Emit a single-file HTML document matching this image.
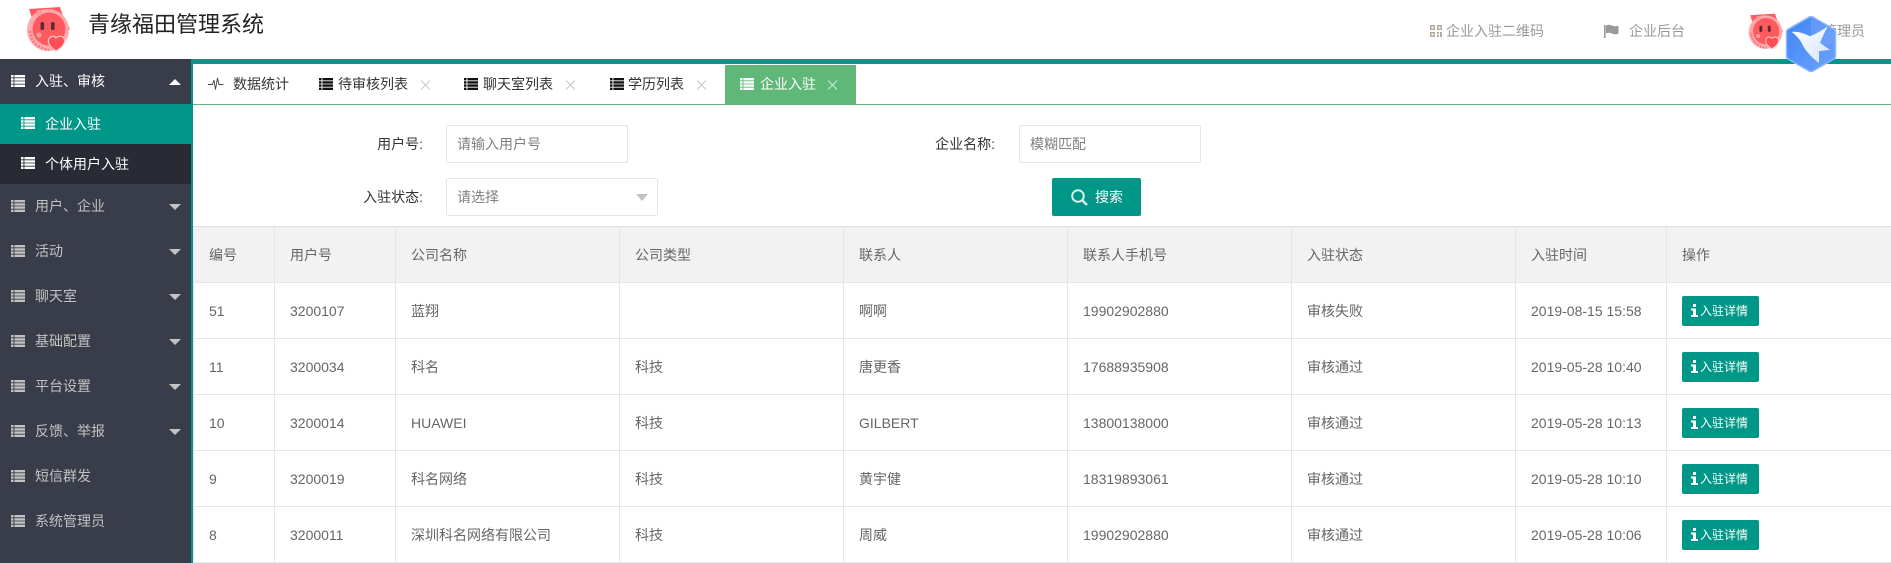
<!DOCTYPE html>
<html lang="zh-CN">
<head>
<meta charset="utf-8">
<title>青缘福田管理系统</title>
<style>
*{box-sizing:border-box}
html,body{margin:0;padding:0;width:1891px;height:563px;overflow:hidden;background:#fff}
body{font-family:"Liberation Sans","Noto Sans CJK SC",sans-serif;font-size:14px;color:#666;position:relative}
.a{position:absolute;white-space:nowrap}
.t{line-height:20px;height:20px}
.side{position:absolute;left:0;top:59px;width:191px;height:504px;background:#393d49}
.strip{position:absolute;left:191px;top:59px;width:2px;height:504px;background:#009688}
.bar{position:absolute;left:191px;top:59px;width:1700px;height:5px;background:#009688}
.tabline{position:absolute;left:193px;top:104px;width:1698px;height:1px;background:#5fb878}
.m{position:absolute;left:0;width:191px;height:45px;line-height:45px;color:#c2c2c2}
.m span{position:absolute;left:35px;top:0}
.m svg.l{position:absolute;left:11px;top:16px}
.arr{position:absolute;left:169px;top:20px;width:0;height:0;border-left:6px solid transparent;border-right:6px solid transparent;border-top:6px solid #c2c2c2}
.s{position:absolute;left:0;width:191px;height:40px;line-height:40px;color:#fff}
.s span{position:absolute;left:45px;top:0}
.s svg.l{position:absolute;left:21px;top:13px}
.tab{position:absolute;top:74px;line-height:20px;height:20px;color:#333}
.x{position:absolute;top:80px}
.inp{position:absolute;border:1px solid #e6e6e6;border-radius:2px;height:38px;line-height:36px;padding-left:10px;color:#808080;background:#fff}
.lab{position:absolute;line-height:20px;color:#333;text-align:right}
table{position:absolute;left:193px;top:226px;width:1720px;border-collapse:collapse;table-layout:fixed;color:#666;font-size:14px}
th,td{border:1px solid #e6e6e6;height:56px;padding:0 15px;text-align:left;font-weight:400;white-space:nowrap;overflow:hidden}
th{background:#f2f2f2}
tr:first-child th{border-top:1px solid #e2e2e2}
.bt{display:block;width:77px;height:30px;line-height:30px;background:#009688;color:#fff;font-size:12px;border-radius:2px;position:relative;padding-left:18px;font-weight:400}
.bt svg{position:absolute;left:9px;top:8px}
</style>
</head>
<body>
<svg width="0" height="0" style="position:absolute">
  <defs>
    <symbol id="list" viewBox="0 0 14 12">
      <path fill="currentColor" d="M0 0h2.500v2.400H0zM3.400 0H14v2.400H3.400zM0 3.200h2.500v2.400H0zM3.400 3.200H14v2.400H3.400zM0 6.400h2.500v2.400H0zM3.400 6.400H14v2.400H3.400zM0 9.600h2.500V12H0zM3.400 9.600H14V12H3.400z"/>
    </symbol>
    <symbol id="close" viewBox="0 0 11 10">
      <path fill="none" stroke="currentColor" stroke-width="1" d="M1 .5l9 9M10 .5l-9 9"/>
    </symbol>
    <symbol id="logo" viewBox="0 0 60 58">
      <path fill="#ff5b60" d="M9 9 L25 8 L40 7 L43 16 L50 29 L44 33 L30 30 L14 24Z"/>
      <circle cx="28" cy="30" r="21" fill="#ffa9ac"/>
      <circle cx="29" cy="29" r="16.500" fill="#ff5a60"/>
      <path fill="none" stroke="#ff7478" stroke-width="2.400" stroke-dasharray="2 1.500" d="M10 31c0 9 8 18 19 19"/>
      <circle cx="19" cy="13" r="3" fill="#ff9a9d"/>
      <circle cx="19" cy="35" r="2.600" fill="#ff9a9d"/>
      <rect x="20.500" y="22" width="3.600" height="8" rx="1.800" fill="#5a2c30"/>
      <rect x="31" y="22" width="3.600" height="8" rx="1.800" fill="#5a2c30"/>
      <path fill="#ff4d55" stroke="#ffc4c6" stroke-width="1.200" d="M36 51 C30 47 28 43 28.500 40 C29.500 36 34 35 36 38 C39 35 44 36 44.500 40 C45 44 41 48 36 51Z"/>
    </symbol>
  </defs>
</svg>

<!-- Header -->
<svg class="a" style="left:20px;top:0" width="60" height="58"><use href="#logo"/></svg>
<div class="a" style="left:88px;top:10px;font-size:22px;line-height:30px;color:#222">青缘福田管理系统</div>

<svg class="a" style="left:1430px;top:25px" width="12" height="12" viewBox="0 0 12 12"><path fill="#b5aaa0" d="M0 0h5v5H0zM7 0h5v5H7zM0 7h5v5H0zM7 7h2v2H7zM10 7h2v5h-2zM7 10h2v2H7z"/><path fill="#fff" d="M1.500 1.500h2v2h-2zM8.500 1.500h2v2h-2zM1.500 8.500h2v2h-2z"/></svg>
<div class="a t" style="left:1446px;top:21px;color:#999">企业入驻二维码</div>
<svg class="a" style="left:1604px;top:24px" width="15" height="14" viewBox="0 0 15 14"><path fill="#999" d="M0 1h1.600v13H0zM2 1.500c2-1 4-1 6 0s4 1 6.500.2v8c-2.500.8-4.500.8-6.500-.2s-4-1-6 0z"/></svg>
<div class="a t" style="left:1629px;top:21px;color:#999">企业后台</div>
<svg class="a" style="left:1743px;top:8px" width="48" height="46.400"><use href="#logo"/></svg>
<div class="a t" style="left:1823px;top:21px;color:#999">管理员</div>

<!-- Bars -->
<div class="bar"></div>
<div class="strip"></div>
<div class="tabline"></div>

<!-- Sidebar -->
<div class="side"></div>
<div class="m" style="top:59px;color:#fff"><svg class="l" width="14" height="12" style="color:#fff"><use href="#list"/></svg><span>入驻、审核</span><i class="arr" style="border-top:0;border-bottom:6px solid #fff"></i></div>
<div class="s" style="top:104px;background:#009688"><svg class="l" width="14" height="12"><use href="#list"/></svg><span>企业入驻</span></div>
<div class="s" style="top:144px;background:#282b33"><svg class="l" width="14" height="12"><use href="#list"/></svg><span>个体用户入驻</span></div>
<div class="m" style="top:184px"><svg class="l" width="14" height="12"><use href="#list"/></svg><span>用户、企业</span><i class="arr"></i></div>
<div class="m" style="top:229px"><svg class="l" width="14" height="12"><use href="#list"/></svg><span>活动</span><i class="arr"></i></div>
<div class="m" style="top:274px"><svg class="l" width="14" height="12"><use href="#list"/></svg><span>聊天室</span><i class="arr"></i></div>
<div class="m" style="top:319px"><svg class="l" width="14" height="12"><use href="#list"/></svg><span>基础配置</span><i class="arr"></i></div>
<div class="m" style="top:364px"><svg class="l" width="14" height="12"><use href="#list"/></svg><span>平台设置</span><i class="arr"></i></div>
<div class="m" style="top:409px"><svg class="l" width="14" height="12"><use href="#list"/></svg><span>反馈、举报</span><i class="arr"></i></div>
<div class="m" style="top:454px"><svg class="l" width="14" height="12"><use href="#list"/></svg><span>短信群发</span></div>
<div class="m" style="top:499px"><svg class="l" width="14" height="12"><use href="#list"/></svg><span>系统管理员</span></div>

<!-- Tabs -->
<svg class="a" style="left:208px;top:77px" width="16" height="14" viewBox="0 0 16 14"><path fill="none" stroke="#444" stroke-width=".9" d="M0 7.500h4.500L6 3l1.500 9.500L9.500 1l1.500 6.500h4.500"/></svg>
<div class="tab" style="left:233px">数据统计</div>
<svg class="a" style="left:319px;top:78px;color:#111" width="14" height="12"><use href="#list"/></svg>
<div class="tab" style="left:338px">待审核列表</div><svg class="x" style="left:420px;color:#c8c8c8" width="11" height="10"><use href="#close"/></svg>
<svg class="a" style="left:464px;top:78px;color:#111" width="14" height="12"><use href="#list"/></svg>
<div class="tab" style="left:483px">聊天室列表</div><svg class="x" style="left:565px;color:#c8c8c8" width="11" height="10"><use href="#close"/></svg>
<svg class="a" style="left:610px;top:78px;color:#111" width="14" height="12"><use href="#list"/></svg>
<div class="tab" style="left:628px">学历列表</div><svg class="x" style="left:696px;color:#c8c8c8" width="11" height="10"><use href="#close"/></svg>
<div class="a" style="left:725px;top:65px;width:131px;height:39px;background:#5fb878"></div>
<svg class="a" style="left:740px;top:78px;color:#fff" width="14" height="12"><use href="#list"/></svg>
<div class="tab" style="left:760px;color:#fff">企业入驻</div><svg class="x" style="left:827px;color:#cfe8d7" width="11" height="10"><use href="#close"/></svg>

<!-- Form -->
<div class="lab" style="left:343px;top:134px;width:80px">用户号:</div>
<div class="inp" style="left:446px;top:125px;width:182px">请输入用户号</div>
<div class="lab" style="left:915px;top:134px;width:80px">企业名称:</div>
<div class="inp" style="left:1019px;top:125px;width:182px">模糊匹配</div>
<div class="lab" style="left:343px;top:187px;width:80px">入驻状态:</div>
<div class="inp" style="left:446px;top:178px;width:212px">请选择<i style="position:absolute;left:189px;top:15px;width:0;height:0;border-left:6px solid transparent;border-right:6px solid transparent;border-top:7px solid #c2c2c2"></i></div>
<div class="a" style="left:1052px;top:178px;width:89px;height:38px;background:#009688;border-radius:2px;color:#fff;line-height:38px;padding-left:43px;font-size:14px">搜索
  <svg style="position:absolute;left:19px;top:11px" width="17" height="17" viewBox="0 0 17 17"><circle cx="7" cy="7" r="5.800" fill="none" stroke="#d8f0ec" stroke-width="2"/><path d="M11 11l5 5" stroke="#d8f0ec" stroke-width="2.600"/></svg>
</div>

<!-- Table -->
<table>
<colgroup><col style="width:81px"><col style="width:121px"><col style="width:224px"><col style="width:224px"><col style="width:224px"><col style="width:224px"><col style="width:224px"><col style="width:151px"><col></colgroup>
<tr><th>编号</th><th>用户号</th><th>公司名称</th><th>公司类型</th><th>联系人</th><th>联系人手机号</th><th>入驻状态</th><th>入驻时间</th><th>操作</th></tr>
<tr><td>51</td><td>3200107</td><td>蓝翔</td><td></td><td>啊啊</td><td>19902902880</td><td>审核失败</td><td>2019-08-15 15:58</td><td><span class="bt"><svg width="7" height="13" viewBox="0 0 7 13"><path fill="#fff" d="M2 0h3v3H2zM0 4.500h5V11h2v2H0v-2h2V6.500H0z"/></svg>入驻详情</span></td></tr>
<tr><td>11</td><td>3200034</td><td>科名</td><td>科技</td><td>唐更香</td><td>17688935908</td><td>审核通过</td><td>2019-05-28 10:40</td><td><span class="bt"><svg width="7" height="13" viewBox="0 0 7 13"><path fill="#fff" d="M2 0h3v3H2zM0 4.500h5V11h2v2H0v-2h2V6.500H0z"/></svg>入驻详情</span></td></tr>
<tr><td>10</td><td>3200014</td><td>HUAWEI</td><td>科技</td><td>GILBERT</td><td>13800138000</td><td>审核通过</td><td>2019-05-28 10:13</td><td><span class="bt"><svg width="7" height="13" viewBox="0 0 7 13"><path fill="#fff" d="M2 0h3v3H2zM0 4.500h5V11h2v2H0v-2h2V6.500H0z"/></svg>入驻详情</span></td></tr>
<tr><td>9</td><td>3200019</td><td>科名网络</td><td>科技</td><td>黄宇健</td><td>18319893061</td><td>审核通过</td><td>2019-05-28 10:10</td><td><span class="bt"><svg width="7" height="13" viewBox="0 0 7 13"><path fill="#fff" d="M2 0h3v3H2zM0 4.500h5V11h2v2H0v-2h2V6.500H0z"/></svg>入驻详情</span></td></tr>
<tr><td>8</td><td>3200011</td><td>深圳科名网络有限公司</td><td>科技</td><td>周威</td><td>19902902880</td><td>审核通过</td><td>2019-05-28 10:06</td><td><span class="bt"><svg width="7" height="13" viewBox="0 0 7 13"><path fill="#fff" d="M2 0h3v3H2zM0 4.500h5V11h2v2H0v-2h2V6.500H0z"/></svg>入驻详情</span></td></tr>
</table>

<!-- Floating blue hexagon badge -->
<svg class="a" style="left:1785px;top:15px" width="52" height="58" viewBox="0 0 52 58">
  <defs>
    <linearGradient id="hx" x1="0" y1="0" x2="1" y2="1"><stop offset="0" stop-color="#3f84f7"/><stop offset="1" stop-color="#6ea3fb"/></linearGradient>
    <linearGradient id="bd" x1="0" y1="0" x2="1" y2="1"><stop offset="0" stop-color="#fff"/><stop offset="1" stop-color="#d6e4fd"/></linearGradient>
  </defs>
  <path d="M24 2.200 Q26 1 28 2.200 L48.800 14.200 Q50.500 15.200 50.500 17 V41 Q50.500 43 48.800 44 L28 56 Q26 57 24 56 L3.200 44 Q1.500 43 1.500 41 V17 Q1.500 15.200 3.200 14.200Z" fill="url(#hx)" stroke="#8db8fb" stroke-width="1.500"/>
  <path d="M26 3 L49 16 V30 L26 29Z" fill="#7aa9fb" opacity=".45"/>
  <path d="M6.700 17 C10 16.500 14 17 16.700 18 C19 18.500 22.500 20 25 21.300 C31 19 38 15 42.700 11.300 C41 15 38.500 19.500 37 23 L35 28 L45 34.700 L34 36.300 L34 48 C30 45 26 41.500 23.300 38 C20 34.500 18 31 16.700 28 C14 23.500 11 20 6.700 17Z" fill="url(#bd)"/>
</svg>
</body>
</html>
